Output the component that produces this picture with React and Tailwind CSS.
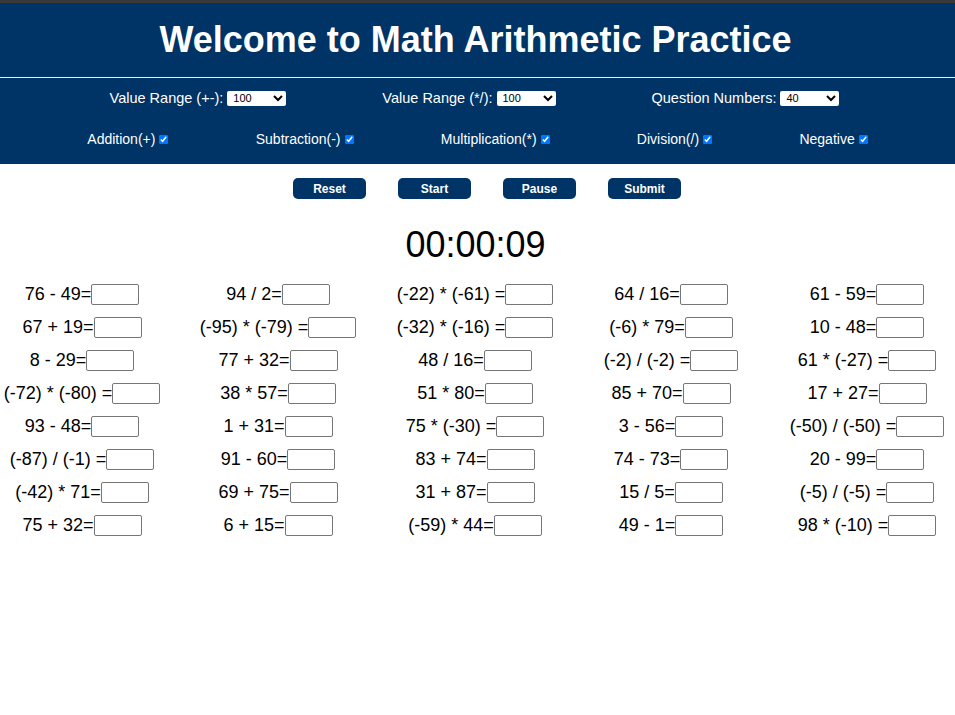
const questions = [
  ['76 - 49=', '94 / 2=', '(-22) * (-61) =', '64 / 16=', '61 - 59='],
  ['67 + 19=', '(-95) * (-79) =', '(-32) * (-16) =', '(-6) * 79=', '10 - 48='],
  ['8 - 29=', '77 + 32=', '48 / 16=', '(-2) / (-2) =', '61 * (-27) ='],
  ['(-72) * (-80) =', '38 * 57=', '51 * 80=', '85 + 70=', '17 + 27='],
  ['93 - 48=', '1 + 31=', '75 * (-30) =', '3 - 56=', '(-50) / (-50) ='],
  ['(-87) / (-1) =', '91 - 60=', '83 + 74=', '74 - 73=', '20 - 99='],
  ['(-42) * 71=', '69 + 75=', '31 + 87=', '15 / 5=', '(-5) / (-5) ='],
  ['75 + 32=', '6 + 15=', '(-59) * 44=', '49 - 1=', '98 * (-10) ='],
];

const ops = ['Addition(+)', 'Subtraction(-)', 'Multiplication(*)', 'Division(/)', 'Negative'];

const RangeSelect = ({ label, value }) => (
  <label className="flex items-center gap-[4px]">
    <span>{label}</span>
    <select
      defaultValue={value}
      className="w-[59px] h-[15px] bg-white text-black text-[11px] leading-[13px] rounded-[2px] pl-[2px]"
    >
      <option>{value}</option>
    </select>
  </label>
);

const App = () => {
  return (
    <div className="min-h-[715px] bg-white font-['Liberation_Sans',Arial,sans-serif] text-black">
      <div className="h-[3px] bg-[#3a3a3a]" />
      <div className="bg-[#003366] text-white pb-[17px]">
        <h1 className="pt-[16px] pr-[4px] text-center text-[36px] leading-[42px] font-bold">
          Welcome to Math Arithmetic Practice
        </h1>
        <div className="mt-[16px] h-[1px] bg-[#e6f0ff]" />
        <div className="mt-[12px] pr-[6px] flex justify-center gap-[96px] text-[14.5px] leading-[16px]">
          <RangeSelect label="Value Range (+-):" value="100" />
          <RangeSelect label="Value Range (*/):" value="100" />
          <RangeSelect label="Question Numbers:" value="40" />
        </div>
        <div className="mt-[25px] flex justify-evenly text-[14px] leading-[16px]">
          {ops.map((op) => (
            <label key={op} className="flex items-center gap-[4px]">
              <span>{op}</span>
              <input type="checkbox" defaultChecked className="w-[9px] h-[9px] accent-[#0075ff]" />
            </label>
          ))}
        </div>
      </div>

      <div className="mt-[14px] pl-[19px] flex justify-center gap-[32px]">
        {['Reset', 'Start', 'Pause', 'Submit'].map((b) => (
          <button
            key={b}
            className="w-[73px] h-[21px] rounded-[5px] bg-[#003366] text-white text-[12px] font-bold"
          >
            {b}
          </button>
        ))}
      </div>

      <div className="mt-[25px] pr-[4px] text-center text-[36px] leading-[42px]">00:00:09</div>

      <div className="mt-[12px] grid grid-cols-[164px_228px_166px_226px_166px] text-[18px]">
        {questions.map((row, i) =>
          row.map((q, j) => (
            <div key={`${i}-${j}`} className="h-[33px] flex items-center justify-center">
              <span>{q}</span>
              <input
                type="text"
                className="w-[48px] h-[21px] border border-[#767676] rounded-[2px] bg-white"
              />
            </div>
          ))
        )}
      </div>
    </div>
  );
};

export default App;
